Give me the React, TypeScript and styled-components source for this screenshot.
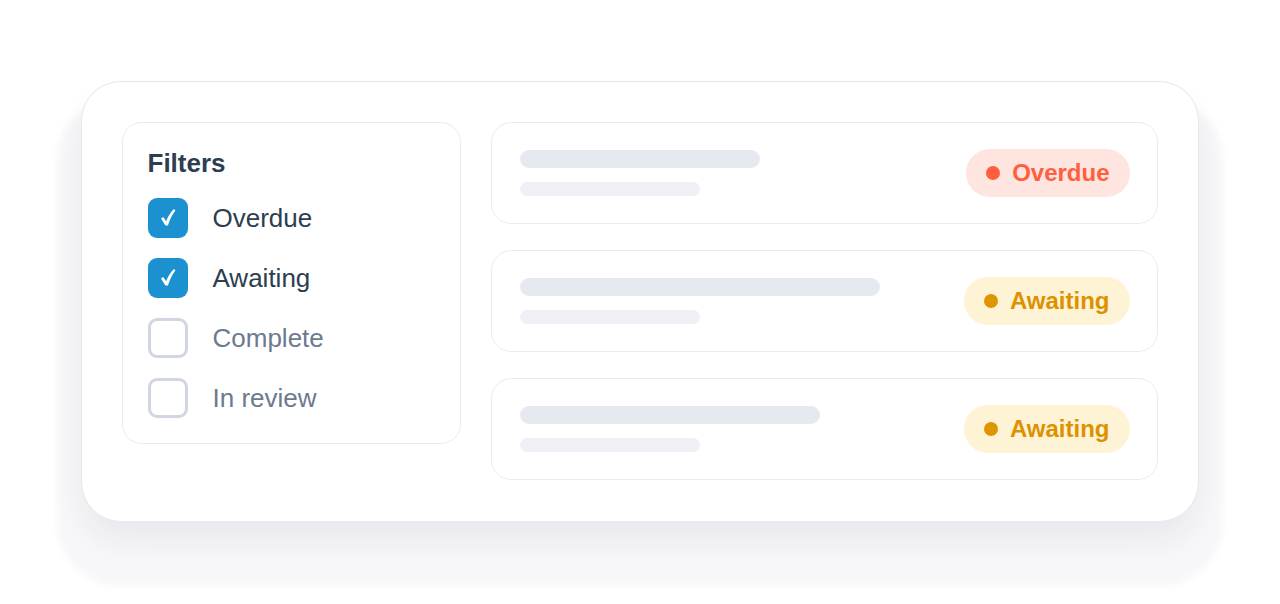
import React from "react";
import styled, { createGlobalStyle } from "styled-components";

const GlobalStyle = createGlobalStyle`
  html, body {
    margin: 0;
    padding: 0;
    background: #ffffff;
    font-family: "Liberation Sans", Arial, sans-serif;
  }
`;

const StyledPage = styled.div`
  width: 1280px;
  height: 604px;
  box-sizing: border-box;
  padding: 81px 81px 0 81px;
  overflow: hidden;
`;

const StyledCard = styled.div`
  box-sizing: border-box;
  width: 1118px;
  height: 441px;
  background: #ffffff;
  border: 1.5px solid #e7e7ed;
  border-radius: 40px;
  padding: 40px;
  display: flex;
  align-items: flex-start;
  gap: 30px;
  box-shadow: 0 20px 30px 0 rgba(30, 35, 70, 0.06),
    0 40px 8px 24px #f7f7f9;
`;

const StyledFilters = styled.div`
  box-sizing: border-box;
  width: 339px;
  border: 1.5px solid #eaebf0;
  border-radius: 20px;
  padding: 25px 24px 25px 24.5px;
`;

const StyledTitle = styled.h3`
  margin: 0 0 19.5px 0;
  font-size: 26px;
  line-height: 30px;
  font-weight: 700;
  color: #2d3e50;
`;

const StyledOptions = styled.div`
  display: flex;
  flex-direction: column;
  gap: 20px;
`;

const StyledOption = styled.label<{ $checked: boolean }>`
  display: flex;
  align-items: center;
  gap: 25px;
  font-size: 26px;
  line-height: 40px;
  color: ${(p) => (p.$checked ? "#2c3e50" : "#6c7a8f")};
`;

const StyledBox = styled.span<{ $checked: boolean }>`
  box-sizing: border-box;
  width: 40px;
  height: 40px;
  border-radius: 9px;
  display: flex;
  align-items: center;
  justify-content: center;
  background: ${(p) => (p.$checked ? "#1b91d0" : "#ffffff")};
  border: ${(p) => (p.$checked ? "none" : "3px solid #d1d7e2")};
`;

const StyledList = styled.div`
  flex: 1;
  display: flex;
  flex-direction: column;
  gap: 26px;
`;

const StyledRow = styled.div`
  box-sizing: border-box;
  height: 102px;
  border: 1.5px solid #eaebf0;
  border-radius: 20px;
  padding: 0 27.5px;
  display: flex;
  align-items: center;
  justify-content: space-between;
`;

const StyledLines = styled.div`
  display: flex;
  flex-direction: column;
  gap: 14px;
`;

const StyledBar = styled.div<{ $width: number; $main?: boolean }>`
  width: ${(p) => p.$width}px;
  height: ${(p) => (p.$main ? 18 : 14)}px;
  border-radius: 9px;
  background: ${(p) => (p.$main ? "#e6e9f0" : "#eef0f5")};
`;

type Tone = "overdue" | "awaiting";

const tones: Record<Tone, { bg: string; fg: string; dot: string }> = {
  overdue: { bg: "#fee5df", fg: "#ff5f3e", dot: "#ff5f3e" },
  awaiting: { bg: "#fff3d5", fg: "#dc9200", dot: "#de9500" },
};

const StyledBadge = styled.span<{ $tone: Tone }>`
  height: 48px;
  padding: 0 20px;
  border-radius: 24px;
  display: flex;
  align-items: center;
  gap: 12px;
  font-size: 24px;
  font-weight: 700;
  background: ${(p) => tones[p.$tone].bg};
  color: ${(p) => tones[p.$tone].fg};
`;

const StyledDot = styled.span<{ $tone: Tone }>`
  width: 14px;
  height: 14px;
  border-radius: 50%;
  background: ${(p) => tones[p.$tone].dot};
`;

const CheckMark = () => (
  <svg width="16" height="19" viewBox="0 0 16 19">
    <path
      d="M1 10.4 L3.2 8.9 L6.2 13.3 C8 8.2 10.6 4.1 14 1 L15.4 2.4 C12.4 6 9.9 11 7.9 17.6 L5.4 17.6 Z"
      fill="#ffffff"
    />
  </svg>
);

const filters = [
  { label: "Overdue", checked: true },
  { label: "Awaiting", checked: true },
  { label: "Complete", checked: false },
  { label: "In review", checked: false },
];

const rows: { width: number; tone: Tone; label: string }[] = [
  { width: 240, tone: "overdue", label: "Overdue" },
  { width: 360, tone: "awaiting", label: "Awaiting" },
  { width: 300, tone: "awaiting", label: "Awaiting" },
];

export default function App() {
  return (
    <>
      <GlobalStyle />
      <StyledPage>
        <StyledCard>
          <StyledFilters>
            <StyledTitle>Filters</StyledTitle>
            <StyledOptions>
              {filters.map((f) => (
                <StyledOption key={f.label} $checked={f.checked}>
                  <StyledBox $checked={f.checked}>
                    {f.checked && <CheckMark />}
                  </StyledBox>
                  {f.label}
                </StyledOption>
              ))}
            </StyledOptions>
          </StyledFilters>
          <StyledList>
            {rows.map((r, i) => (
              <StyledRow key={i}>
                <StyledLines>
                  <StyledBar $width={r.width} $main />
                  <StyledBar $width={180} />
                </StyledLines>
                <StyledBadge $tone={r.tone}>
                  <StyledDot $tone={r.tone} />
                  {r.label}
                </StyledBadge>
              </StyledRow>
            ))}
          </StyledList>
        </StyledCard>
      </StyledPage>
    </>
  );
}
